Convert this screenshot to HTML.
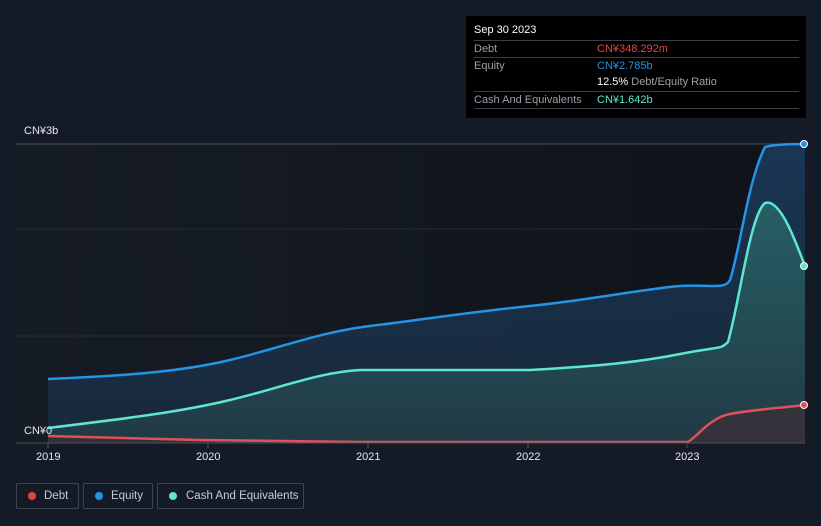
<!DOCTYPE html><html><head><meta charset="utf-8"><style>
body{margin:0;width:821px;height:526px;background:#151b26;font-family:"Liberation Sans",sans-serif;overflow:hidden;position:relative}
.tt{position:absolute;left:466px;top:16px;width:340px;height:102px;background:#000;color:#fff;font-size:11px}
.row{position:absolute;left:8px;width:325px;border-top:1px solid #3a3f47;height:17px;line-height:17px;color:#9aa0a6}
.v{position:absolute;left:123px}
.leg{position:absolute;top:483px;height:26px;border:1px solid #3d4350;border-radius:2px;color:#c8ccd2;font-size:11.5px;line-height:24px;box-sizing:border-box;white-space:nowrap}
.leg i{position:absolute;left:11px;top:8px;width:8px;height:8px;border-radius:50%}
.ax{position:absolute;color:#e6e8eb;font-size:11px}
</style></head><body>
<svg width="821" height="526" style="position:absolute;left:0;top:0">
<defs>
<linearGradient id="bg" x1="0" y1="0" x2="1" y2="0"><stop offset="0" stop-color="#161c26"/><stop offset="1" stop-color="#0f1319"/></linearGradient>
<linearGradient id="ge" x1="0" y1="0" x2="0" y2="1"><stop offset="0" stop-color="#1a3a5a" stop-opacity=".9"/><stop offset="1" stop-color="#1a2c40" stop-opacity=".8"/></linearGradient>
<linearGradient id="gc" x1="0" y1="0" x2="0" y2="1"><stop offset="0" stop-color="#2a6a6a" stop-opacity=".8"/><stop offset="1" stop-color="#233e48" stop-opacity=".8"/></linearGradient>
</defs>
<rect x="16" y="144" width="789" height="299" fill="url(#bg)"/>
<line x1="16" y1="144" x2="805" y2="144" stroke="#4a505a"/>
<line x1="16" y1="229" x2="805" y2="229" stroke="#252b36"/>
<line x1="16" y1="336" x2="805" y2="336" stroke="#252b36"/>
<path d="M48,379 C120,376 180,372 230,360 S320,332 370,326 S470,312 530,306 S650,288 680,286 S725,290 730,280 C740,250 748,180 765,147 C775,144 795,144 805,144 L805,443 L48,443Z" fill="url(#ge)"/>
<path d="M48,428 C130,418 180,412 230,400 S320,372 360,370 L530,370 C600,366 640,362 680,354 S720,350 728,342 C740,300 750,215 765,203 C780,198 795,240 805,266 L805,443 L48,443Z" fill="url(#gc)"/>
<path d="M48,436 L200,440 L360,442 L688,442 C700,434 710,418 730,414 S780,408 805,405 L805,443 L48,443Z" fill="#3a3038" opacity=".8"/>
<path d="M48,379 C120,376 180,372 230,360 S320,332 370,326 S470,312 530,306 S650,288 680,286 S725,290 730,280 C740,250 748,180 765,147 C775,144 795,144 805,144" fill="none" stroke="#2394e6" stroke-width="2.5"/>
<path d="M48,428 C130,418 180,412 230,400 S320,372 360,370 L530,370 C600,366 640,362 680,354 S720,350 728,342 C740,300 750,215 765,203 C780,198 795,240 805,266" fill="none" stroke="#5ee6d0" stroke-width="2.5"/>
<path d="M48,436 L200,440 L360,442 L688,442 C700,434 710,418 730,414 S780,408 805,405" fill="none" stroke="#e0505a" stroke-width="2.5"/>
<line x1="16" y1="443" x2="805" y2="443" stroke="#4a505a"/>
<g stroke="#4a505a"><line x1="48" y1="443" x2="48" y2="448"/><line x1="208" y1="443" x2="208" y2="448"/><line x1="368" y1="443" x2="368" y2="448"/><line x1="528" y1="443" x2="528" y2="448"/><line x1="687" y1="443" x2="687" y2="448"/></g>
<circle cx="804" cy="144" r="3.5" fill="#2394e6" stroke="#fff"/>
<circle cx="804" cy="266" r="3.5" fill="#5ee6d0" stroke="#fff"/>
<circle cx="804" cy="405" r="3.5" fill="#e0505a" stroke="#fff"/>
</svg>
<div class="ax" style="left:24px;top:125px">CN¥3b</div>
<div class="ax" style="left:24px;top:425px">CN¥0</div>
<div class="ax" style="left:36px;top:451px">2019</div>
<div class="ax" style="left:196px;top:451px">2020</div>
<div class="ax" style="left:356px;top:451px">2021</div>
<div class="ax" style="left:516px;top:451px">2022</div>
<div class="ax" style="left:675px;top:451px">2023</div>
<div class="tt">
<div style="position:absolute;left:8px;top:8px;font-size:11px">Sep 30 2023</div>
<div class="row" style="top:24px">Debt<span class="v" style="color:#e84545">CN¥348.292m</span></div>
<div class="row" style="top:41px">Equity<span class="v" style="color:#2394e6">CN¥2.785b</span></div>
<div class="row" style="top:58px;border-top:none"><span class="v" style="color:#fff">12.5% <span style="color:#9aa0a6">Debt/Equity Ratio</span></span></div>
<div class="row" style="top:75px">Cash And Equivalents<span class="v" style="color:#5ee6d0">CN¥1.642b</span></div>
<div class="row" style="top:92px;height:0"></div>
</div>
<div class="leg" style="left:16px;width:63px"><i style="background:#e84545"></i><span style="margin-left:27px">Debt</span></div>
<div class="leg" style="left:83px;width:70px"><i style="background:#2394e6"></i><span style="margin-left:27px">Equity</span></div>
<div class="leg" style="left:157px;width:147px"><i style="background:#5ee6d0"></i><span style="margin-left:28px">Cash And Equivalents</span></div>
</body></html>
